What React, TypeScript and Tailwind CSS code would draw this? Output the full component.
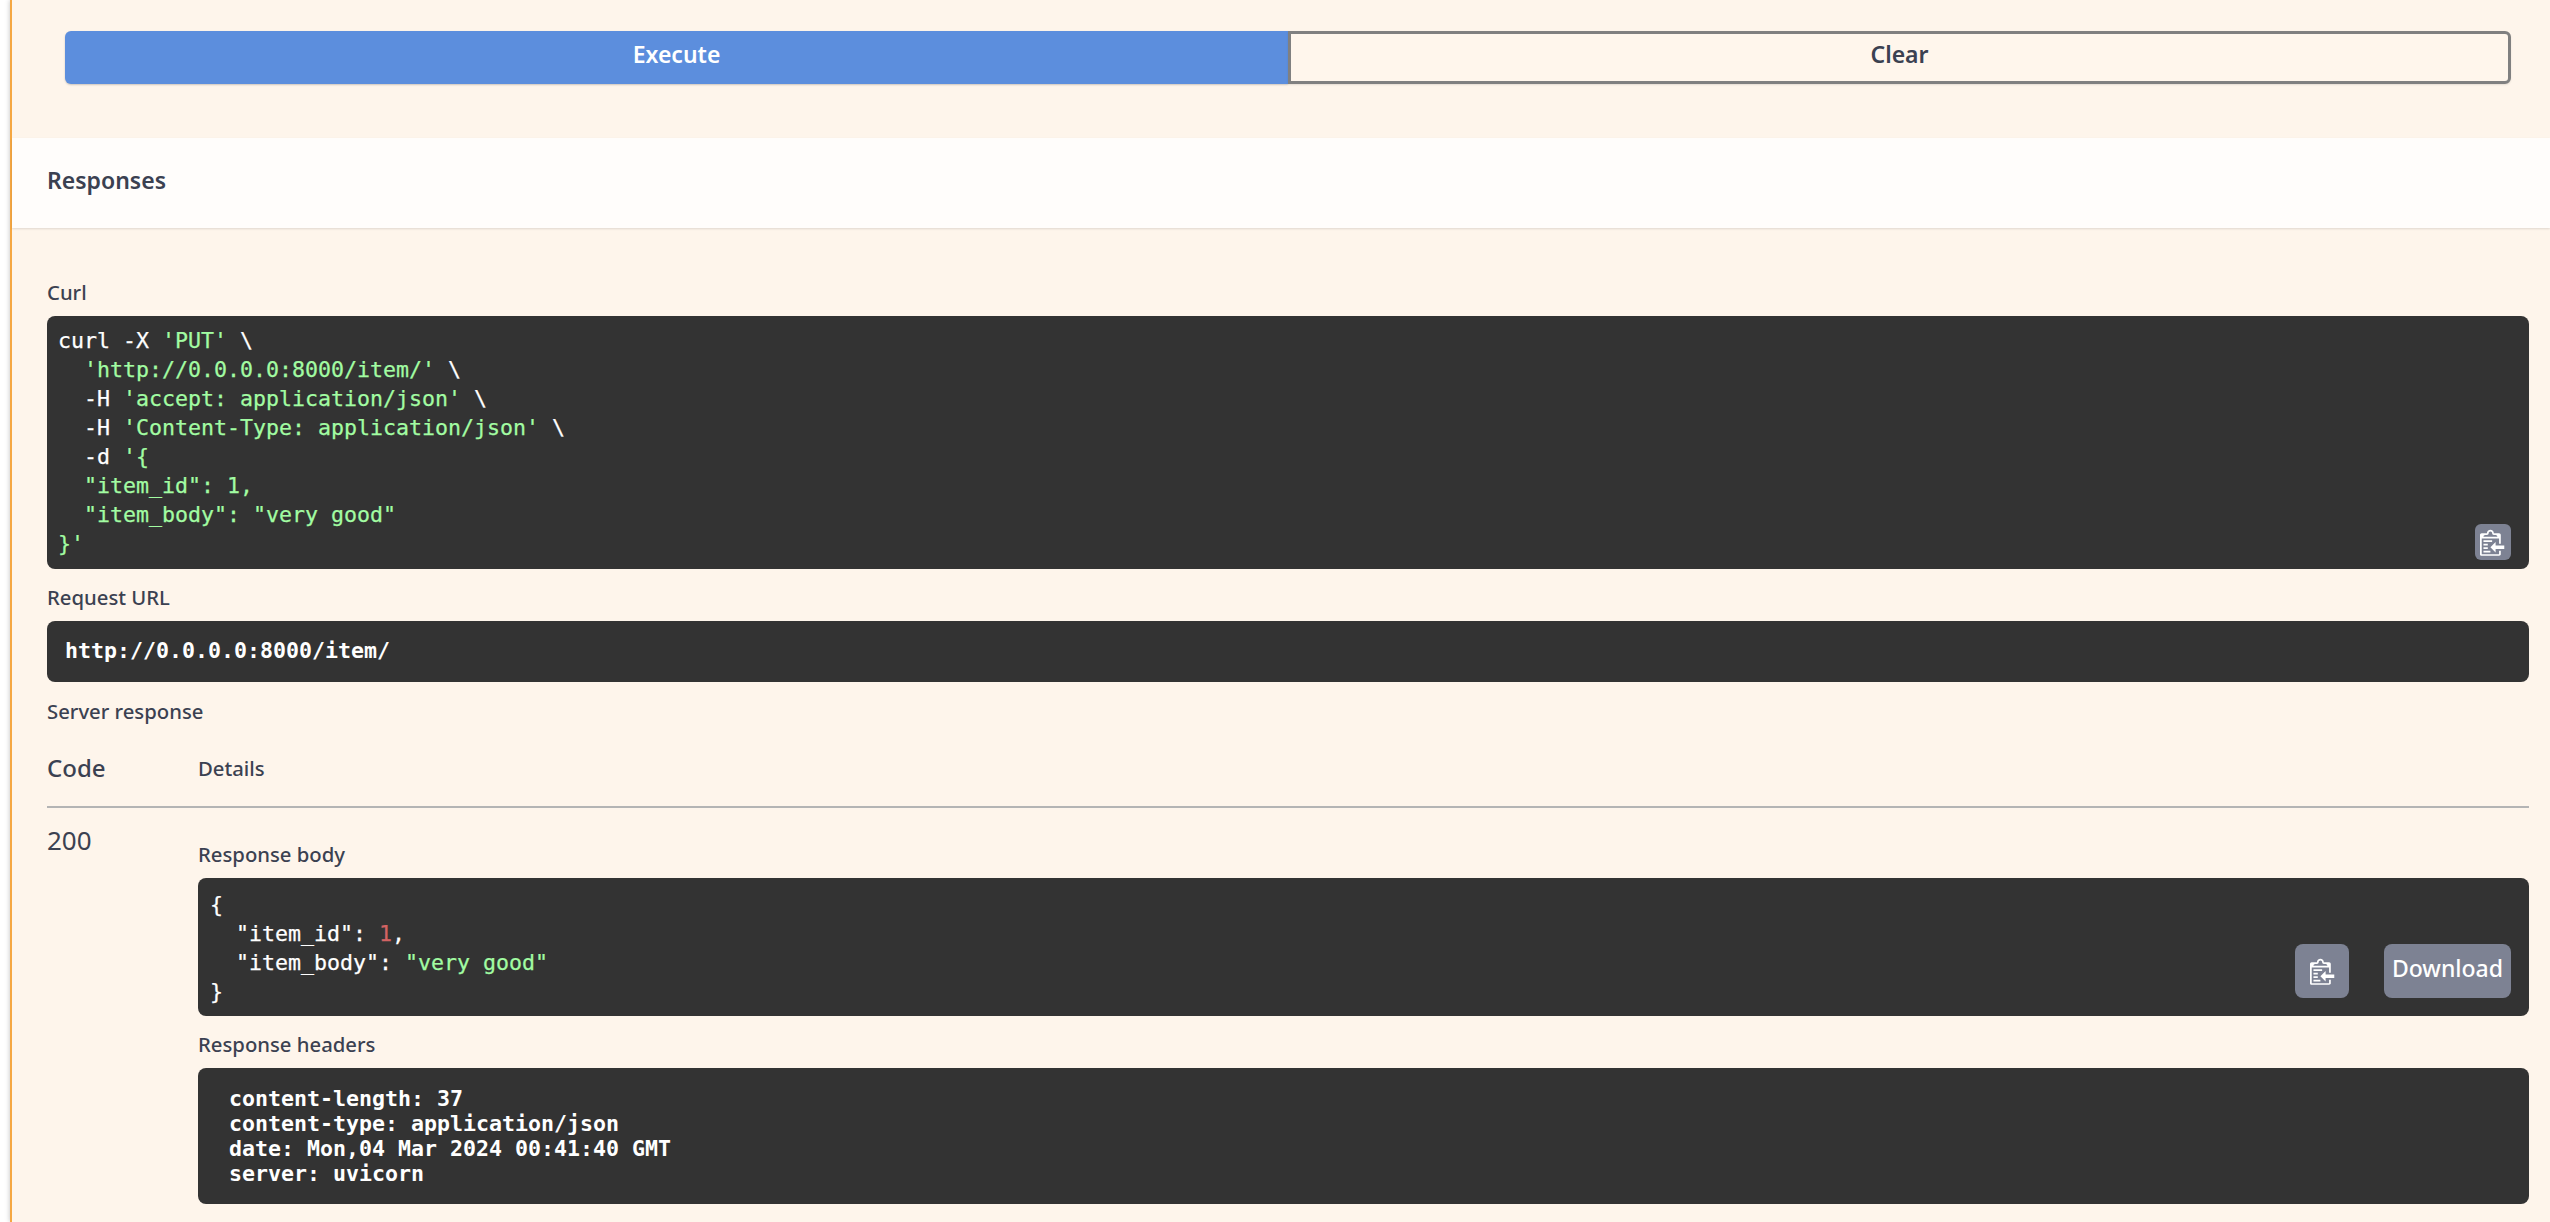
const sans = "font-['Noto_Sans','Open_Sans',sans-serif]";
const mono = "font-['DejaVu_Sans_Mono',monospace]";

function CopyIcon() {
  return (
    <svg viewBox="0 0 15 16" className="w-[26px] h-[28px]" fill="#ffffff" aria-hidden="true">
      <path
        fillRule="evenodd"
        d="M2 13h4v1H2v-1zm5-6H2v1h5V7zm2 3V8l-3 3 3 3v-2h5v-2H9zM4.5 9H2v1h2.5V9zM2 12h2.5v-1H2v1zm9 1h1v2c-.02.28-.11.52-.3.7-.19.18-.42.28-.7.3H1c-.55 0-1-.45-1-1V4c0-.55.45-1 1-1h3c0-1.11.89-2 2-2 1.11 0 2 .89 2 2h3c.55 0 1 .45 1 1v5h-1V6H1v9h10v-2zM2 5h8c0-.55-.45-1-1-1H8c-.55 0-1-.45-1-1s-.45-1-1-1-1 .45-1 1-.45 1-1 1H3c-.55 0-1 .45-1 1z"
      />
    </svg>
  );
}

function Label({ children, className = "" }: { children: string; className?: string }) {
  return <div className={`text-[20.3px] leading-[26px] font-medium text-[#3b4151] ${className}`}>{children}</div>;
}

export default function App() {
  return (
    <div className={`min-h-[1222px] h-[1222px] overflow-hidden bg-white ${sans}`}>
      <div className="ml-[10px] h-full border-l-2 border-[#f5a742] bg-[#fef5eb] shadow-[0_0_5px_rgba(0,0,0,0.25)]">
        <div className="flex pt-[31px] pb-[54px] pl-[53px] pr-[39px]">
          <button className="w-1/2 h-[53px] pb-[7px] rounded-l-[6px] bg-[#5c8edd] text-white text-[23px] font-semibold shadow-[0_1px_2px_rgba(0,0,0,0.2)]">
            Execute
          </button>
          <button className="w-1/2 h-[53px] pb-[7px] rounded-r-[6px] border-[3px] border-[#808080] bg-[#fff6ec] text-[#3b4151] text-[23px] font-semibold shadow-[0_1px_2px_rgba(0,0,0,0.1)]">
            Clear
          </button>
        </div>

        <div className="h-[90px] pb-[5px] flex items-center px-[35px] bg-[#fffdfb] shadow-[0_1px_2px_rgba(0,0,0,0.12)]">
          <h4 className="text-[23px] font-semibold text-[#3b4151]">Responses</h4>
        </div>

        <div className="pl-[35px] pr-[21px] pt-[51px]">
          <Label className="mb-[11px]">Curl</Label>
          <div className={`relative h-[253px] rounded-[8px] bg-[#333333] px-[11px] py-[10px] text-[21.6px] leading-[29px] text-white whitespace-pre [-webkit-text-stroke:0.25px] ${mono}`}>
            <div>curl -X <span className="text-[#a2fca2]">'PUT'</span> \</div>
            <div>  <span className="text-[#a2fca2]">'http://0.0.0.0:8000/item/'</span> \</div>
            <div>  -H <span className="text-[#a2fca2]">'accept: application/json'</span> \</div>
            <div>  -H <span className="text-[#a2fca2]">'Content-Type: application/json'</span> \</div>
            <div>  -d <span className="text-[#a2fca2]">'{"{"}</span></div>
            <div className="text-[#a2fca2]">  "item_id": 1,</div>
            <div className="text-[#a2fca2]">  "item_body": "very good"</div>
            <div className="text-[#a2fca2]">{"}'"}</div>
            <button className="absolute right-[18px] bottom-[9px] w-[36px] h-[36px] rounded-[6px] bg-[#7d8293] flex items-center justify-center">
              <CopyIcon />
            </button>
          </div>

          <Label className="mt-[15px] mb-[11px]">Request URL</Label>
          <div className={`h-[61px] rounded-[8px] bg-[#333333] flex items-center px-[18px] text-[21.6px] font-bold text-white ${mono}`}>
            http://0.0.0.0:8000/item/
          </div>

          <Label className="mt-[16px]">Server response</Label>

          <div className="flex mt-[28px] h-[56px] border-b-2 border-[#b4b4b4] items-start">
            <div className="w-[151px] text-[24px] leading-[32px] font-medium text-[#3b4151]">Code</div>
            <div className="text-[20.3px] leading-[32px] font-medium text-[#3b4151]">Details</div>
          </div>

          <div className="flex pt-[15px]">
            <div className="w-[151px] text-[26px] leading-[34px] text-[#3b4151]">200</div>
            <div className="flex-1">
              <Label className="mt-[18px] mb-[11px]">Response body</Label>
              <div className={`relative h-[138px] rounded-[8px] bg-[#333333] px-[12px] pt-[12px] text-[21.6px] leading-[29px] text-white whitespace-pre [-webkit-text-stroke:0.25px] ${mono}`}>
                <div>{"{"}</div>
                <div>  "item_id": <span className="text-[#d36363]">1</span>,</div>
                <div>  "item_body": <span className="text-[#a2fca2]">"very good"</span></div>
                <div>{"}"}</div>
                <div className={`absolute right-[18px] bottom-[18px] flex gap-[35px] [-webkit-text-stroke:0px] ${sans}`}>
                  <button className="w-[54px] h-[54px] pl-[2px] rounded-[8px] bg-[#7d8293] flex items-center justify-center">
                    <CopyIcon />
                  </button>
                  <button className="w-[127px] h-[54px] rounded-[8px] bg-[#7d8293] text-white text-[23px] font-medium leading-[46px] pb-[7px]">
                    Download
                  </button>
                </div>
              </div>

              <Label className="mt-[15px] mb-[11px]">Response headers</Label>
              <div className={`h-[136px] rounded-[8px] bg-[#333333] pl-[31px] pt-[18px] text-[21.6px] leading-[25px] font-bold text-white whitespace-pre ${mono}`}>
                <div>content-length: 37</div>
                <div>content-type: application/json</div>
                <div>date: Mon,04 Mar 2024 00:41:40 GMT</div>
                <div>server: uvicorn</div>
              </div>
            </div>
          </div>
        </div>
      </div>
    </div>
  );
}
